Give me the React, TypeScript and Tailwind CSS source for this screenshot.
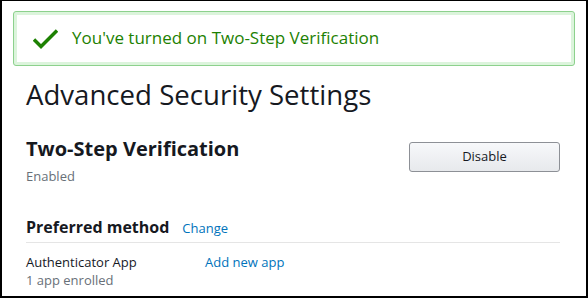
import React from "react";

export default function App() {
  return (
    <div
      className="w-[588px] h-[298px] bg-white border-t border-l-2 border-r-2 border-b-2 border-black overflow-hidden"
      style={{ fontFamily: '"Open Sans", "Noto Sans", sans-serif' }}
    >
      <div className="mx-[11px] mt-[10px] h-[55px] rounded-[3px] border border-[#8dd18d] p-[3px] bg-[#dcf4dc]">
        <div className="h-full bg-white flex items-center pl-[16px] pb-[2px]">
          <svg width="25" height="20" viewBox="0 0 25 20" className="mr-[14px] mt-[2px]">
            <path d="M1 10.5 L8 17.5 L24 1.5" fill="none" stroke="#1d8102" strokeWidth="3.4" />
          </svg>
          <span className="text-[17px] text-[#1d8102]">You've turned on Two-Step Verification</span>
        </div>
      </div>
      <div className="pl-[24px] pr-[26px]">
        <h1 className="mt-[10px] text-[27.6px] leading-[36px] text-[#16191f]">Advanced Security Settings</h1>
        <div className="mt-[23px] flex justify-between items-start">
          <div>
            <div className="text-[20px] font-bold leading-[28px] text-[#16191f]">Two-Step Verification</div>
            <div className="mt-[4px] text-[13px] leading-[18px] text-[#687078]">Enabled</div>
          </div>
          <button className="mt-[7px] w-[151px] h-[30px] rounded-[3px] border border-[#8d9096] bg-gradient-to-b from-[#f7f8fa] to-[#e7e9ec] text-[13px] text-[#16191f]">
            Disable
          </button>
        </div>
        <div className="mt-[30px] flex items-baseline pb-[3px] border-b border-[#e5e5e5]">
          <span className="text-[16px] font-bold text-[#16191f]">Preferred method</span>
          <span className="ml-[13px] text-[13px] text-[#0073bb]">Change</span>
        </div>
        <div className="mt-[10px] flex">
          <div className="w-[179px]">
            <div className="text-[13px] leading-[18px] text-[#16191f]">Authenticator App</div>
            <div className="text-[13px] leading-[18px] text-[#687078]">1 app enrolled</div>
          </div>
          <div className="text-[13px] leading-[18px] text-[#0073bb]">Add new app</div>
        </div>
      </div>
    </div>
  );
}
